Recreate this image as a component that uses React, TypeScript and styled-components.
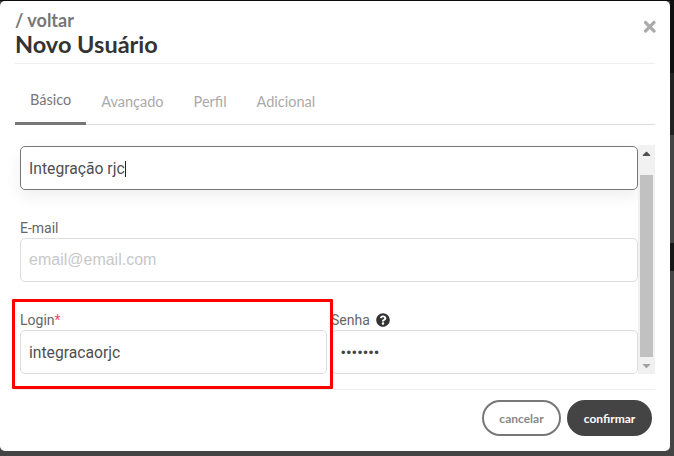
import { FC } from "react";
import styled, { createGlobalStyle } from "styled-components";
import { FaTimes, FaQuestionCircle, FaCaretUp, FaCaretDown } from "react-icons/fa";

const GlobalStyle = createGlobalStyle`
  html, body {
    margin: 0;
    padding: 0;
    width: 674px;
    height: 456px;
    overflow: hidden;
    background: #444444;
  }
`;

const Page = styled.div`
  width: 674px;
  height: 456px;
  display: grid;
  grid-template-columns: 670px 4px;
  grid-template-rows: 451px 5px;
  padding-top: 1px;
  box-sizing: border-box;
  background: #444444;
  box-shadow: inset 0 1px 0 #0c0c0c;
`;

const Modal = styled.div`
  position: relative;
  background: #ffffff;
  border-radius: 5px;
  padding: 0 15px;
  box-sizing: border-box;
  height: 450px;
  display: flex;
  flex-direction: column;
`;

const Backdrop = styled.div`
  display: flex;
  flex-direction: column;
`;

const Strip = styled.div<{ $h: number; $c: string }>`
  height: ${(p) => p.$h}px;
  background: ${(p) => p.$c};
`;

const Header = styled.div`
  height: 63px;
  padding-top: 9px;
  box-sizing: border-box;
  border-bottom: 1px solid #eeeeee;
  display: flex;
  justify-content: space-between;
  font-family: "Lato", sans-serif;
`;

const Back = styled.div`
  font-size: 18px;
  line-height: 20px;
  font-weight: 700;
  color: #777777;
`;

const Title = styled.h1`
  margin: 0;
  font-size: 23.5px;
  line-height: 29px;
  font-weight: 700;
  color: #333333;
`;

const Close = styled.span`
  display: flex;
  color: #aaaaaa;
  font-size: 17.5px;
  margin: 8px -3px 0 0;
  height: 18px;
`;

const Tabs = styled.div`
  height: 61px;
  box-sizing: border-box;
  border-bottom: 1px solid #dddddd;
  display: flex;
  font-family: "Lato", sans-serif;
`;

const Tab = styled.div<{ $active?: boolean }>`
  padding: ${(p) => (p.$active ? "26px" : "28px")} 15px 0;
  height: 61px;
  box-sizing: border-box;
  font-size: 14.5px;
  line-height: 20px;
  color: ${(p) => (p.$active ? "#777777" : "#aaaaaa")};
  border-bottom: ${(p) => (p.$active ? "3px solid #777777" : "0")};
`;

const Content = styled.div`
  margin-top: 20px;
  height: 229px;
  display: flex;
`;

const Form = styled.div`
  flex: 1;
  padding: 1px 0 0 5px;
  display: flex;
  flex-direction: column;
`;

const Row = styled.div`
  display: flex;
  gap: 4px;
  margin-top: 48px;
  &:first-child {
    margin-top: 0;
  }
`;

const Field = styled.div`
  flex: 1;
  min-width: 0;
  display: flex;
  flex-direction: column;
`;

const Label = styled.label`
  display: flex;
  align-items: center;
  height: 0;
  position: relative;
  top: -10px;
  font-family: "Roboto", sans-serif;
  font-size: 14px;
  color: #666666;
`;

const Required = styled.span`
  color: #f0506e;
`;

const HelpIcon = styled.span`
  display: inline-flex;
  margin-left: 6px;
  font-size: 14px;
  color: #333333;
`;

const InputBox = styled.div<{ $focus?: boolean; $font?: string }>`
  height: 44px;
  box-sizing: border-box;
  border: 1px solid ${(p) => (p.$focus ? "#777777" : "#dddddd")};
  border-radius: 5px;
  padding: 0 8px;
  display: flex;
  align-items: center;
  background: #ffffff;
  font-family: ${(p) => p.$font || '"Roboto", sans-serif'};
  font-size: ${(p) => (p.$font ? "16px" : "15.7px")};
  color: #4f4f4f;
  box-shadow: ${(p) => (p.$focus ? "0 6px 16px rgba(0, 0, 0, 0.07)" : "none")};
`;

const Caret = styled.span`
  display: inline-block;
  width: 1px;
  height: 16px;
  background: #222222;
  vertical-align: -3px;
`;

const Placeholder = styled.span`
  color: #c8c8c8;
`;

const Dots = styled.span`
  font-family: "Liberation Sans", sans-serif;
  font-size: 13px;
  letter-spacing: 1px;
  color: #444444;
  padding-left: 1px;
`;

const Scrollbar = styled.div`
  width: 17px;
  background: #f1f1f1;
  display: flex;
  flex-direction: column;
  align-items: center;
`;

const Arrow = styled.span<{ $dim?: boolean }>`
  height: 17px;
  display: flex;
  align-items: center;
  justify-content: center;
  font-size: 13px;
  color: ${(p) => (p.$dim ? "#a3a3a3" : "#505050")};
`;

const TrackSpace = styled.div`
  flex: 1;
  width: 13px;
  padding-top: 13px;
  display: flex;
  box-sizing: border-box;
`;

const Thumb = styled.div`
  flex: 1;
  background: #c1c1c1;
`;

const Footer = styled.div`
  margin-top: 15px;
  border-top: 1px solid #eeeeee;
  padding: 10px 3px 0 0;
  display: flex;
  justify-content: flex-end;
  gap: 6px;
  font-family: "Lato", sans-serif;
`;

const Button = styled.button<{ $primary?: boolean }>`
  height: 36px;
  width: ${(p) => (p.$primary ? 85 : 79)}px;
  border-radius: 18px;
  border: 2px solid ${(p) => (p.$primary ? "#444444" : "#777777")};
  background: ${(p) => (p.$primary ? "#444444" : "#ffffff")};
  color: ${(p) => (p.$primary ? "#ffffff" : "#888888")};
  font-family: inherit;
  font-size: 12px;
  font-weight: 700;
  padding: 0;
`;

// marcação vermelha feita por cima do print
const Highlight = styled.div`
  position: absolute;
  left: 12px;
  top: 298px;
  width: 321px;
  height: 90px;
  box-sizing: border-box;
  border: 3px solid #ff0000;
  border-radius: 1px;
  pointer-events: none;
`;

const App: FC = () => {
  return (
    <Page>
      <GlobalStyle />
      <Modal>
        <Header>
          <div>
            <Back>/ voltar</Back>
            <Title>Novo Usuário</Title>
          </div>
          <Close>
            <FaTimes />
          </Close>
        </Header>
        <Tabs>
          <Tab $active>Básico</Tab>
          <Tab>Avançado</Tab>
          <Tab>Perfil</Tab>
          <Tab>Adicional</Tab>
        </Tabs>
        <Content>
          <Form>
            <Row>
              <Field>
                <InputBox $focus>
                  <span>
                    Integração rjc
                    <Caret />
                  </span>
                </InputBox>
              </Field>
            </Row>
            <Row>
              <Field>
                <Label>E-mail</Label>
                <InputBox $font='"Liberation Sans", sans-serif'>
                  <Placeholder>email@email.com</Placeholder>
                </InputBox>
              </Field>
            </Row>
            <Row>
              <Field>
                <Label>
                  Login<Required>*</Required>
                </Label>
                <InputBox>integracaorjc</InputBox>
              </Field>
              <Field>
                <Label>
                  Senha
                  <HelpIcon>
                    <FaQuestionCircle />
                  </HelpIcon>
                </Label>
                <InputBox>
                  <Dots>•••••••</Dots>
                </InputBox>
              </Field>
            </Row>
          </Form>
          <Scrollbar>
            <Arrow>
              <FaCaretUp />
            </Arrow>
            <TrackSpace>
              <Thumb />
            </TrackSpace>
            <Arrow $dim>
              <FaCaretDown />
            </Arrow>
          </Scrollbar>
        </Content>
        <Footer>
          <Button>cancelar</Button>
          <Button $primary>confirmar</Button>
        </Footer>
        <Highlight />
      </Modal>
      <Backdrop>
        <Strip $h={72} $c="#101010" />
        <Strip $h={62} $c="#222222" />
        <Strip $h={108} $c="#444444" />
        <Strip $h={28} $c="#181818" />
        <Strip $h={180} $c="#444444" />
      </Backdrop>
    </Page>
  );
};

export default App;
